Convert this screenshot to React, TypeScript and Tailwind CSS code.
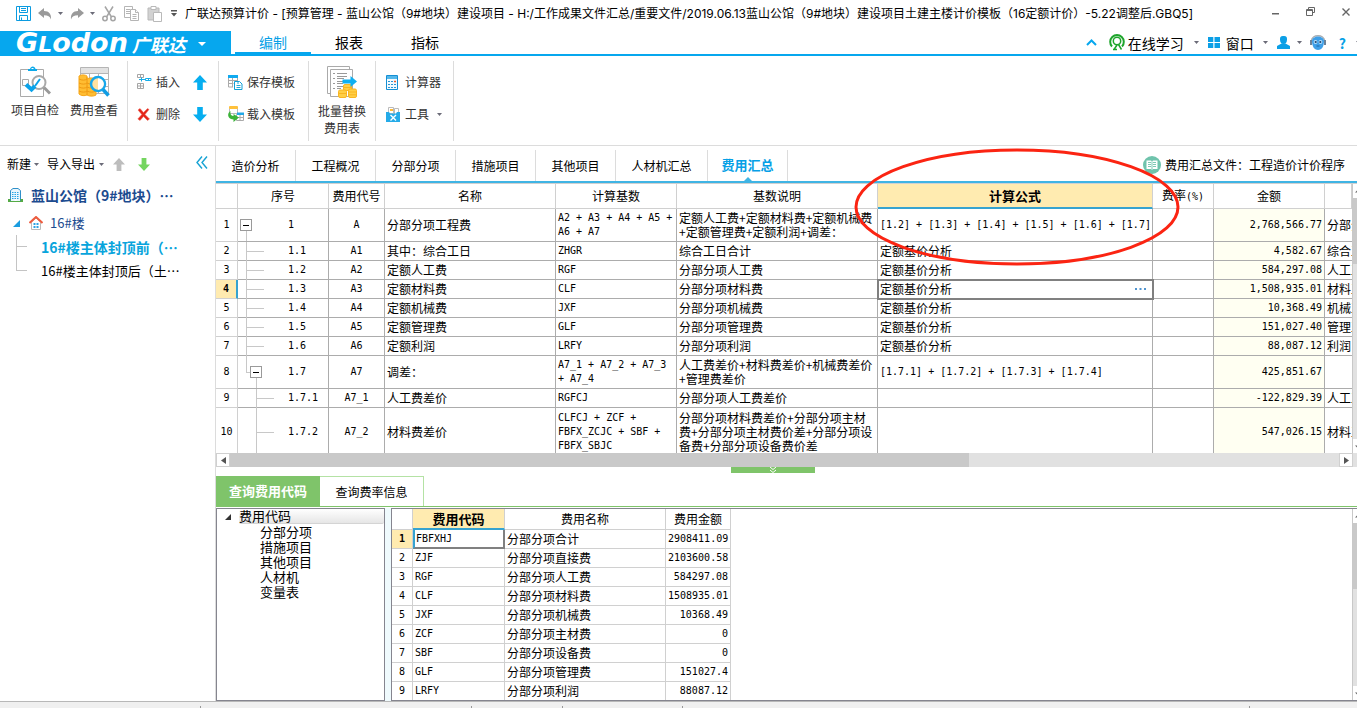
import React from "react";

type FeeRow = {
  no: string;
  level: number;
  serial: string;
  code: string;
  name: string;
  base: string;
  desc: string;
  formula: string;
  amount: string;
  note: string;
  height: string;
};

const SHORT = "h-[19px]";
const DOUBLE = "h-[33px]";

const feeRows: FeeRow[] = [
  { no: "1", level: 0, serial: "1", code: "A", name: "分部分项工程费", base: "A2 + A3 + A4 + A5 +\nA6 + A7", desc: "定额人工费+定额材料费+定额机械费\n+定额管理费+定额利润+调差：", formula: "[1.2] + [1.3] + [1.4] + [1.5] + [1.6] + [1.7]", amount: "2,768,566.77", note: "分部分项", height: DOUBLE },
  { no: "2", level: 1, serial: "1.1", code: "A1", name: "其中：综合工日", base: "ZHGR", desc: "综合工日合计", formula: "定额基价分析", amount: "4,582.67", note: "综合工日", height: SHORT },
  { no: "3", level: 1, serial: "1.2", code: "A2", name: "定额人工费", base: "RGF", desc: "分部分项人工费", formula: "定额基价分析", amount: "584,297.08", note: "人工工资", height: SHORT },
  { no: "4", level: 1, serial: "1.3", code: "A3", name: "定额材料费", base: "CLF", desc: "分部分项材料费", formula: "定额基价分析", amount: "1,508,935.01", note: "材料工费", height: SHORT },
  { no: "5", level: 1, serial: "1.4", code: "A4", name: "定额机械费", base: "JXF", desc: "分部分项机械费", formula: "定额基价分析", amount: "10,368.49", note: "机械工费", height: SHORT },
  { no: "6", level: 1, serial: "1.5", code: "A5", name: "定额管理费", base: "GLF", desc: "分部分项管理费", formula: "定额基价分析", amount: "151,027.40", note: "管理工费", height: SHORT },
  { no: "7", level: 1, serial: "1.6", code: "A6", name: "定额利润", base: "LRFY", desc: "分部分项利润", formula: "定额基价分析", amount: "88,087.12", note: "利润", height: SHORT },
  { no: "8", level: 1, serial: "1.7", code: "A7", name: "调差：", base: "A7_1 + A7_2 + A7_3\n+ A7_4", desc: "人工费差价+材料费差价+机械费差价\n+管理费差价", formula: "[1.7.1] + [1.7.2] + [1.7.3] + [1.7.4]", amount: "425,851.67", note: "", height: DOUBLE },
  { no: "9", level: 2, serial: "1.7.1", code: "A7_1", name: "人工费差价", base: "RGFCJ", desc: "分部分项人工费差价", formula: "", amount: "-122,829.39", note: "人工工资", height: SHORT },
  { no: "10", level: 2, serial: "1.7.2", code: "A7_2", name: "材料费差价", base: "CLFCJ + ZCF +\nFBFX_ZCJC + SBF +\nFBFX_SBJC", desc: "分部分项材料费差价+分部分项主材\n费+分部分项主材费价差+分部分项设\n备费+分部分项设备费价差", formula: "", amount: "547,026.15", note: "材料工费", height: "h-[49px]" },
];

const codeRows = [
  ["1", "FBFXHJ", "分部分项合计", "2908411.09"],
  ["2", "ZJF", "分部分项直接费", "2103600.58"],
  ["3", "RGF", "分部分项人工费", "584297.08"],
  ["4", "CLF", "分部分项材料费", "1508935.01"],
  ["5", "JXF", "分部分项机械费", "10368.49"],
  ["6", "ZCF", "分部分项主材费", "0"],
  ["7", "SBF", "分部分项设备费", "0"],
  ["8", "GLF", "分部分项管理费", "151027.4"],
  ["9", "LRFY", "分部分项利润", "88087.12"],
];

const MONO = "font-['DejaVu_Sans_Mono','Noto_Sans_CJK_SC',monospace] text-[10px]";

function Caret({ className = "text-[#6b6b78]" }: { className?: string }) {
  return (
    <svg className={`shrink-0 ${className}`} width="5" height="3" viewBox="0 0 5 3" fill="currentColor">
      <path d="M0 0h5L2.5 3z" />
    </svg>
  );
}

function SaveIcon() {
  return (
    <svg width="15" height="15" viewBox="0 0 15 15" fill="none" stroke="#0b9be0">
      <path d="M.5 .5h14v14H.5zM3.500 .5v6h8v-6M3.500 14.500v-5h8v5M5 2.500h5M5 4.500h5M5.500 11.500v3" />
    </svg>
  );
}

function UndoIcon({ flip = false }: { flip?: boolean }) {
  return (
    <svg className={flip ? "-scale-x-100" : ""} width="14" height="12" viewBox="0 0 14 12" fill="#9a9a9a">
      <path d="M0 5 6 0v3c5 0 7.500 3 7 8.500C12 8.500 10 7.200 6 7.200V10z" />
    </svg>
  );
}

function CutIcon() {
  return (
    <svg width="14" height="16" viewBox="0 0 14 16" fill="none" stroke="#a5a5a5" strokeWidth="1.500">
      <path d="M3 .5 9.500 11M11 .5 4.500 11" />
      <circle cx="3" cy="12.500" r="2.200" />
      <circle cx="11" cy="12.500" r="2.200" />
    </svg>
  );
}

function CopyIcon() {
  return (
    <svg width="16" height="15" viewBox="0 0 16 15" fill="#fff" stroke="#b5b5b5">
      <path d="M.5.5h8v11h-8zM2 3.500h4M2 5.500h4M2 7.500h4" />
      <path d="M6.500 3.500h5l3 3v8h-8z" />
      <path d="M11.500 3.500v3h3M8.500 8.500h4M8.500 10.500h4M8.500 12.500h4" />
    </svg>
  );
}

function PasteIcon() {
  return (
    <svg width="16" height="16" viewBox="0 0 16 16" fill="#fff" stroke="#b9b9b9">
      <path d="M1 2h11v12H1z" fill="#d2d2d2" />
      <path d="M4 .5h5v3H4z" />
      <path d="M6.500 6.500h8v9h-8z" />
    </svg>
  );
}

function CheckProjectIcon() {
  return (
    <svg width="32" height="32" viewBox="0 0 32 32" fill="none">
      <path d="M1.500 3.500h23v27h-23z" stroke="#aaa" fill="#fff" />
      <path d="M9 5V3h2c.5-3.500 5-3.500 5.500 0H18v2z" fill="#0ba9ea" />
      <path d="M12.500 2.500h2" stroke="#fff" />
      <path d="M3.500 13.500h6v6h-6z" stroke="#aaa" />
      <circle cx="20" cy="16.500" r="6.500" stroke="#a9a9a9" strokeWidth="2" fill="#fff" />
      <path d="m25 21.500 6 6" stroke="#999" strokeWidth="3" />
      <path d="m7 18.500 5.500 5 3.500-3.500" stroke="#0ba3ea" strokeWidth="4" />
      <path d="m16 20 5-7" stroke="#0ba3ea" strokeWidth="2" />
    </svg>
  );
}

function FeeViewIcon() {
  return (
    <svg width="32" height="32" viewBox="0 0 32 32" fill="none">
      <path d="M2.500 1.500h28v26h-28z" fill="#fff" stroke="#b5b5b5" />
      <path d="M3 2h27v5H3z" fill="#e2e2e2" />
      <path d="M2 7.500h28M2 13.500h28M2 20.500h28M11.500 7v20M20.500 7v20" stroke="#b5b5b5" />
      <path d="M1 10c2-1.500 6-1.500 8 0v3c2-1.500 7-1.500 9 0v16c-2 1.500-7 1.500-9 0-2 1-6 1-8-1z" fill="#ffbd32" stroke="#f7a719" />
      <path d="M1 13c3 1.500 6 1.500 8 0M1 17c3 1.500 6 1.500 8 0M1 21c3 1.500 6 1.500 8 0M1 25c3 1.500 6 1.500 8 0M9 17c3 1.500 6 1.500 9 0M9 21c3 1.500 6 1.500 9 0M9 25c3 1.500 6 1.500 9 0M9 11v18" stroke="#f09a12" />
      <circle cx="20" cy="18" r="7" fill="#ffe1a0" stroke="#17a7ec" strokeWidth="2.500" />
      <path d="M20 12.200a5.800 5.800 0 0 1 0 11.600z" fill="#fff" />
      <path d="m25 23.500 5.500 6" stroke="#109de4" strokeWidth="3.500" />
    </svg>
  );
}

function InsertIcon() {
  return (
    <svg width="15" height="16" viewBox="0 0 15 16" fill="none" stroke="#a5a5a5">
      <path d="M.5 .5h6v3h-6zM3.500 .5v3M.5 9.500h6v5h-6zM3.500 9.500v5M.5 12h6" />
      <path d="M8.500 4.500H14v2H8.500zM11.500 4.500v2" stroke="#17aeea" />
      <path d="M2 5.500h6M4.500 3.500v4" stroke="#17aeea" />
    </svg>
  );
}

function DeleteIcon() {
  return (
    <svg width="13" height="13" viewBox="0 0 13 13">
      <path d="M1 2 3 .5l3.500 4L10.500.5 12 1.500 8 6.500l4.500 4.500-2 1.500-4-4-3.500 4L.8 11 4.800 6.500z" fill="#e42418" stroke="#ec6557" strokeWidth=".5" />
    </svg>
  );
}

function ArrowIcon({ down = false, className, thin = false }: { down?: boolean; className: string; thin?: boolean }) {
  return (
    <svg className={`shrink-0 ${className} ${down ? "rotate-180" : ""}`} width={thin ? 12 : 14} height={thin ? 13 : 15} viewBox="0 0 14 15" fill="currentColor">
      <path d="m7 0 7 7.500H9.800V15H4.200V7.500H0z" />
    </svg>
  );
}

function SaveTemplateIcon() {
  return (
    <svg width="15" height="15" viewBox="0 0 15 15" fill="none">
      <path d="M.5 1v11H5M4.500 2v10M.5 5.500h9M.5 8.500h5M9.500 3v3" stroke="#aaa" />
      <path d="M0 0h10v3H0z" fill="#10aaf0" />
      <path d="M6.500 6.500h5l2.500 2.500v5.500H6.500z" fill="#fff" stroke="#10a0d8" />
      <path d="M8.500 10.500h4M8.500 12.500h4M9 8h2" stroke="#22a8d8" />
    </svg>
  );
}

function LoadTemplateIcon() {
  return (
    <svg width="16" height="16" viewBox="0 0 16 16" fill="none">
      <path d="M1.500 2.500h8v5h-8z" fill="#fff" stroke="#bbb" />
      <rect x="1" y="0" width="9" height="3" rx="1" fill="#ffc13b" />
      <path d="M8.500 8.500h7v6h-7zM12 8.500v6M8.500 11.500h7" stroke="#aaa" fill="#fff" />
      <path d="M9 6.500h7v2.500H9z" fill="#20a8e8" />
      <path d="M2.500 5C-1 7-1 13 5.500 13.500V16l5.500-4.500L5.500 8v2C3 10 2 8 2.500 5z" fill="#3bb338" />
    </svg>
  );
}

function BatchReplaceIcon() {
  return (
    <svg width="32" height="32" viewBox="0 0 32 32" fill="none">
      <path d="M1.500.5h22v27h-22z" fill="#fff" stroke="#aaa" />
      <path d="M4.500 3.500h22v27h-22z" fill="#fff" stroke="#aaa" />
      <path d="M7 7.500h2M7 12.500h2M7 17.500h2M7 22.500h2M11 7.500h10M11 10.500h10M11 12.500h7M11 15.500h6M11 17.500h6M11 20.500h7M11 22.500h4" stroke="#999" />
      <g fill="#ffcf45" stroke="#f9b522">
        <rect x="17.500" y="18.500" width="8" height="6" rx="1.500" />
        <rect x="12.500" y="24" width="8" height="7.500" rx="1.500" />
        <rect x="22.500" y="23" width="8" height="8.500" rx="1.500" />
        <path d="M18 21.500h7M13 27.500h7M23 26h7M23 28.800h7" />
      </g>
      <path d="M16.500 13.500h8V10l6.500 5.500-6.500 5.500v-3.500h-8z" fill="#0fb0f2" />
    </svg>
  );
}

function CalculatorIcon() {
  return (
    <svg width="12" height="15" viewBox="0 0 12 15">
      <path d="M.5.5h11v14H.5z" fill="#f4fbff" stroke="#158fd4" />
      <path d="M1 1h10v3H1z" fill="#54b8ea" />
      <path d="M2 6.500h2M5 6.500h2M2 9.500h2M5 9.500h2M2 12.500h2M5 12.500h2M8 12.500h2M8 9.500h2" stroke="#2c94d4" strokeWidth="1.200" />
      <path d="M8 6.500h2" stroke="#e85b30" strokeWidth="1.500" />
    </svg>
  );
}

function ToolsIcon() {
  return (
    <svg width="14" height="15" viewBox="0 0 14 15" fill="none">
      <path d="M2.500.5h5v6h-5z" fill="#fff" stroke="#bbb" />
      <path d="M8.500 1.500h4v6h-4z" fill="#fff" stroke="#bbb" />
      <path d="M4 2h3v2H4z" fill="#ffbb35" />
      <path d="M0 5h3l1 1.500h6L11 5h3v10H0z" fill="#25abe8" />
      <path d="m4.500 8 5.500 5.500M10 8l-5.500 5.500" stroke="#fff" strokeWidth="1.400" />
    </svg>
  );
}

function StudyIcon() {
  return (
    <svg width="16" height="17" viewBox="0 0 16 17" fill="none" stroke="#1ea52c">
      <path d="M3 12.500A6.800 6.800 0 1 1 13 12.500" strokeWidth="2" />
      <circle cx="8" cy="7" r="3.700" strokeWidth="1.500" />
      <path d="m8 11-3 4.500M9.500 10.500l3 5M4 15.500h4" strokeWidth="1.500" />
    </svg>
  );
}

function RobotIcon() {
  return (
    <svg width="16" height="17" viewBox="0 0 16 17">
      <path d="M1.500 7c0-7 13-7 13 0" fill="none" stroke="#a8adb2" strokeWidth="1.500" />
      <path d="M2 7c0-6 12-6 12 0 0 5-2 9-6 9S2 12 2 7z" fill="#3e9fe8" />
      <path d="M0 6h2v5H0zM14 6h2v5h-2z" fill="#6c8298" />
      <circle cx="5.500" cy="8" r="1.900" fill="#b9e0fb" />
      <circle cx="10.500" cy="8" r="1.900" fill="#b9e0fb" />
      <circle cx="5.700" cy="8" r="1.100" fill="#184574" />
      <circle cx="10.300" cy="8" r="1.100" fill="#184574" />
      <path d="M6.500 12h3" stroke="#1c65a3" />
    </svg>
  );
}

function TitleBar() {
  return (
    <header className="flex h-[31px] shrink-0 items-center pt-1 pb-2 pl-4 pr-[7px]">
      <div className="flex items-center">
        <button aria-label="保存"><SaveIcon /></button>
        <button aria-label="撤销" className="ml-[7px]"><UndoIcon /></button>
        <Caret className="ml-1.5 text-[#6b6b78]" />
        <button aria-label="恢复" className="ml-[7px]"><UndoIcon flip /></button>
        <Caret className="ml-1.5 text-[#6b6b78]" />
        <button aria-label="剪切" className="ml-[7px]"><CutIcon /></button>
        <button aria-label="复制" className="ml-2"><CopyIcon /></button>
        <button aria-label="粘贴" className="ml-[7px]"><PasteIcon /></button>
        <button aria-label="更多" className="ml-2">
          <svg width="6" height="7" viewBox="0 0 6 7" fill="#555"><path d="M0 0h6v1.500H0zM0 3h6L3 6.500z" /></svg>
        </button>
      </div>
      <h1 className="ml-2 whitespace-nowrap font-['Inter','Noto_Sans_CJK_SC',sans-serif] text-xs text-black">
        广联达预算计价 - [预算管理 - 蓝山公馆（9#地块）建设项目 - H:/工作成果文件汇总/重要文件/2019.06.13蓝山公馆（9#地块）建设项目土建主楼计价模板（16定额计价）-5.22调整后.GBQ5]
      </h1>
      <div className="ml-auto flex items-center gap-[27px] pb-1">
        <button aria-label="最小化"><svg width="7" height="9" viewBox="0 0 7 9"><path d="M0 6h7v1.500H0z" fill="#666" /></svg></button>
        <button aria-label="还原"><svg width="9" height="9" viewBox="0 0 9 9" fill="none" stroke="#666"><path d="M2.500 2.500v-2h6v5h-2M.5 2.500h6v6h-6zM.5 3.500h6" /></svg></button>
        <button aria-label="关闭"><svg width="8" height="8" viewBox="0 0 8 8" stroke="#666" strokeWidth="1.400"><path d="m.5.5 7 7M7.500.5l-7 7" /></svg></button>
      </div>
    </header>
  );
}

function MenuBar() {
  return (
    <nav className="flex h-[25px] shrink-0 border-b-2 border-[#06a7ee] text-sm text-black">
      <button className="flex h-[25px] w-[231px] items-center bg-[#06a7ee] pl-4 text-white">
        <span className="font-['DejaVu_Sans',sans-serif] text-[27px] leading-6 font-bold italic">G<span className="text-[22px]">L</span>odon</span>
        <span className="ml-1 text-lg leading-6 font-bold italic">广联达</span>
        <svg className="ml-3" width="8" height="4" viewBox="0 0 8 4" fill="#fff"><path d="M0 0h8L4 4z" /></svg>
      </button>
      <a href="#edit" className="ml-1 flex w-[76px] items-center justify-center border-b-2 border-[#06a7ee] text-[#06a0e6]">编制</a>
      <a href="#report" className="flex w-[76px] items-center justify-center pb-0.5">报表</a>
      <a href="#index" className="flex w-[76px] items-center justify-center pb-0.5">指标</a>
      <div className="ml-auto flex items-center whitespace-nowrap">
        <button aria-label="收起">
          <svg width="11" height="7" viewBox="0 0 11 7" fill="none" stroke="#06a7ee" strokeWidth="2"><path d="m1 6 4.500-4.500L10 6" /></svg>
        </button>
        <button className="ml-3 flex items-center gap-[3px]"><StudyIcon />在线学习</button>
        <Caret className="ml-2.5 text-[#6b6b78]" />
        <button className="ml-[9px] flex items-center gap-1.5">
          <svg width="12" height="11" viewBox="0 0 12 11" fill="#0b9fe6"><path d="M0 0h5.300v5H0zM6.500 0H12v5H6.500zM0 6h5.300v5H0zM6.500 6H12v5H6.500z" /></svg>
          窗口
        </button>
        <Caret className="ml-[9px] text-[#6b6b78]" />
        <button aria-label="用户" className="ml-[9px]">
          <svg width="13" height="13" viewBox="0 0 13 13" fill="#0b9fe6"><path d="M3 3.500C3 .5 4 0 6.500 0S10 .5 10 3.500 8.500 8 6.500 8 3 6.500 3 3.500z" /><path d="M0 13V10l4.500-2.500h4L13 10v3z" /></svg>
        </button>
        <Caret className="ml-[7px] text-[#6b6b78]" />
        <button aria-label="助手" className="ml-2"><RobotIcon /></button>
        <button aria-label="帮助" className="ml-[13px] font-bold text-[#06a0e6]">?</button>
        <span className="ml-2.5 w-px overflow-hidden"><Caret /></span>
      </div>
    </nav>
  );
}

function ToolButton({ icon, label, children }: { icon: React.ReactNode; label: string; children?: React.ReactNode }) {
  return (
    <button className="flex h-8 items-center whitespace-nowrap">
      <span className="flex w-[19px] justify-start">{icon}</span>
      {label}
      {children}
    </button>
  );
}

function Ribbon() {
  return (
    <section className="flex h-[90px] shrink-0 border-b border-[#dcdcdc] pt-[5px] text-xs text-[#333]">
      <div className="flex h-20 w-[128px] items-start gap-[11px] border-r border-[#dcdcdc] pt-[5px] pl-[11px] whitespace-nowrap">
        <button className="flex flex-col items-center gap-1"><CheckProjectIcon />项目自检</button>
        <button className="flex flex-col items-center gap-1"><FeeViewIcon />费用查看</button>
      </div>
      <div className="flex h-20 w-[91px] justify-between border-r border-[#dcdcdc] pt-[5px] pr-[11px] pl-[9px]">
        <div>
          <ToolButton icon={<InsertIcon />} label="插入" />
          <ToolButton icon={<DeleteIcon />} label="删除" />
        </div>
        <div className="flex flex-col">
          <button aria-label="上移" className="flex h-8 items-center"><ArrowIcon className="text-[#06aef0]" /></button>
          <button aria-label="下移" className="flex h-8 items-center"><ArrowIcon down className="text-[#06aef0]" /></button>
        </div>
      </div>
      <div className="h-20 w-[90px] border-r border-[#dcdcdc] pt-[5px] pl-[9px]">
        <ToolButton icon={<SaveTemplateIcon />} label="保存模板" />
        <ToolButton icon={<LoadTemplateIcon />} label="载入模板" />
      </div>
      <div className="flex h-20 w-[67px] items-start justify-center border-r border-[#dcdcdc] pt-[5px]">
        <button className="flex flex-col items-center gap-1 leading-[17px]"><BatchReplaceIcon /><span>批量替换<br />费用表</span></button>
      </div>
      <div className="h-20 w-[78px] border-r border-[#dcdcdc] pt-[5px] pl-2.5">
        <ToolButton icon={<CalculatorIcon />} label="计算器" />
        <ToolButton icon={<ToolsIcon />} label="工具"><Caret className="ml-2 text-[#6b6b78]" /></ToolButton>
      </div>
    </section>
  );
}

function Sidebar() {
  return (
    <aside className="w-[216px] shrink-0 border-r border-[#dcdcdc] pt-1.5 text-[13px] text-black">
      <div className="flex h-6 items-center pl-[7px] text-xs whitespace-nowrap">
        <button className="flex items-center gap-[3px]">新建<Caret /></button>
        <button className="ml-2 flex items-center gap-1">导入导出<Caret /></button>
        <button aria-label="上移" className="ml-[9px]"><ArrowIcon thin className="text-[#bdbdbd]" /></button>
        <button aria-label="下移" className="ml-[13px]"><ArrowIcon thin down className="text-[#74d55f]" /></button>
        <button aria-label="收起侧栏" className="ml-auto pr-[7px] pb-1">
          <svg width="12" height="13" viewBox="0 0 12 13" fill="none" stroke="#17a3d4" strokeWidth="1.400"><path d="M6 .5 1 6.500l5 6M11 .5 6 6.500l5 6" /></svg>
        </button>
      </div>
      <div className="mt-[7px] flex h-6 items-center gap-2 pl-2 text-sm font-bold whitespace-nowrap text-[#1c4b8f]">
        <svg width="15" height="14" viewBox="0 0 15 14">
          <path d="M2.500 2.500 5 .5h5l2.500 2v11h-10z" fill="#eaf6fd" stroke="#2f8fc8" />
          <path d="M4 4.500h7M4 6.500h7M4 8.500h7M4 10.500h7" stroke="#27a5e6" strokeDasharray="1.500 1" />
          <path d="M6.500 11h2v2.500h-2z" fill="#fff" />
          <path d="M0 11h2.500v3H0zM12.500 11H15v3h-2.500zM2 13h11v1H2z" fill="#55aa45" />
        </svg>
        <a href="#project">蓝山公馆（9#地块）⋯</a>
      </div>
      <div className="mt-1 flex h-6 items-center pl-[13px] text-[#1c4b8f]">
        <svg width="7" height="7" viewBox="0 0 7 7" fill="#1b9de0"><path d="M7 0v7H0z" /></svg>
        <svg className="mr-[7px] ml-[9px]" width="14" height="14" viewBox="0 0 14 14" fill="none">
          <path d="M2.500 6v7.500h9V6L7 2z" fill="#fff" stroke="#bbb" />
          <path d="M.5 7 7 1l6.500 6" stroke="#ee5c3e" strokeWidth="2" />
          <path d="M4.500 7h2v2h-2zM7.500 7h2v2h-2zM4.500 10h2v2h-2zM7.500 10h2v2h-2z" fill="#2ea4e4" />
        </svg>
        <a href="#building">16#楼</a>
      </div>
      <div className="ml-4 flex">
        <div className="w-[11px]">
          <div className="h-3 border-b border-l border-[#c4c4c4]" />
          <div className="h-6 border-b border-l border-[#c4c4c4]" />
        </div>
        <div className="ml-3.5 flex flex-col whitespace-nowrap">
          <a href="#before" className="h-6 text-sm leading-6 font-bold text-[#08a4dc]">16#楼主体封顶前（⋯</a>
          <a href="#after" className="h-6 leading-6">16#楼主体封顶后（土⋯</a>
        </div>
      </div>
    </aside>
  );
}

function TreeGuides({ row }: { row: FeeRow }) {
  const line = "absolute bg-[#c8c8c8]";
  const box = "absolute flex size-3 items-center justify-center border border-[#9a9a9a] bg-white";
  const minus = <span className="h-px w-1.5 bg-black" />;
  if (row.level === 0) {
    return (
      <>
        <span className={`${line} top-1/2 bottom-0 left-2 w-px`} />
        <button aria-label="折叠" className={`${box} top-2.5 left-0.5`}>{minus}</button>
      </>
    );
  }
  if (row.no === "8") {
    return (
      <>
        <span className={`${line} top-0 left-2 h-1/2 w-px`} />
        <span className={`${line} top-1/2 left-2 h-px w-2`} />
        <span className={`${line} top-1/2 bottom-0 left-[18px] w-px`} />
        <button aria-label="折叠" className={`${box} top-2.5 left-3`}>{minus}</button>
      </>
    );
  }
  if (row.level === 1) {
    return (
      <>
        <span className={`${line} top-0 -bottom-px left-2 w-px`} />
        <span className={`${line} top-1/2 left-2 h-px w-[18px]`} />
      </>
    );
  }
  return (
    <>
      <span className={`${line} top-0 -bottom-px left-[18px] w-px`} />
      <span className={`${line} top-1/2 left-[18px] h-px w-[18px]`} />
    </>
  );
}

function VerticalScrollbar({ thumb }: { thumb: string }) {
  return (
    <div className="flex w-[5px] shrink-0 flex-col overflow-hidden border-l border-[#c8c8c8] bg-[#e1e1e1]">
      <button aria-label="向上滚动" className="flex h-3.5 shrink-0 items-center bg-white pl-0.5">
        <svg width="3" height="3" viewBox="0 0 3 3" fill="#666"><path d="M3 0v3H0z" /></svg>
      </button>
      <div className={`${thumb} shrink-0 bg-[#c9c9c9]`} />
      <button aria-label="向下滚动" className="mt-auto flex h-3.5 shrink-0 items-center bg-white pl-0.5">
        <svg width="3" height="3" viewBox="0 0 3 3" fill="#666"><path d="M0 0h3v3z" /></svg>
      </button>
    </div>
  );
}

function FeeTable() {
  const head = "h-[25px] border-r border-b border-[#d0d0d0] p-0 font-normal";
  const cell = "border-r border-b border-[#acacac] px-0.5 py-0 whitespace-pre";
  return (
    <div className="flex h-[270px] shrink-0 border-t border-[#d0d0d0]">
      <div className="min-w-0 flex-1 overflow-hidden">
        <table className="w-full table-fixed border-separate border-spacing-0 text-xs leading-[14px] text-black">
          <colgroup>
            <col className="w-[22px]" /><col className="w-[91px]" /><col className="w-14" /><col className="w-[171px]" />
            <col className="w-[121px]" /><col className="w-[201px]" /><col className="w-[275px]" /><col className="w-[61px]" />
            <col className="w-[111px]" /><col />
          </colgroup>
          <thead>
            <tr>
              <th className={head} />
              <th className={head}>序号</th>
              <th className={head}>费用代号</th>
              <th className={head}>名称</th>
              <th className={head}>计算基数</th>
              <th className={head}>基数说明</th>
              <th className="h-[25px] border-r border-b-2 border-r-[#d0d0d0] border-b-[#36a3d0] bg-[#ffebb0] p-0 text-[13px] font-bold">计算公式</th>
              <th className={head}>费率<span className={MONO}>(%)</span></th>
              <th className={head}>金额</th>
              <th className={head} />
            </tr>
          </thead>
          <tbody>
            {feeRows.map((r) => {
              const active = r.no === "4";
              const latin = !r.formula.startsWith("定");
              return (
                <tr key={r.no} className={r.height}>
                  <td className={`border-b p-0 text-center ${MONO} ${active ? "border-r-2 border-r-[#36a3d0] border-b-[#d0d0d0] bg-[#ffebb0] font-bold" : "border-r border-[#d0d0d0]"}`}>{r.no}</td>
                  <td className={`relative border-r border-b border-[#acacac] p-0 pl-[50px] ${MONO}`}>
                    <TreeGuides row={r} />
                    {r.serial}
                  </td>
                  <td className={`${cell} text-center ${MONO}`}>{r.code}</td>
                  <td className={cell}>{r.name}</td>
                  <td className={`${cell} ${MONO}`}>{r.base}</td>
                  <td className={cell}>{r.desc}</td>
                  <td className={`${cell} ${latin ? MONO : ""} ${active ? "outline-2 -outline-offset-1 outline-[#808080]" : ""}`}>
                    {active ? (
                      <div className="flex justify-between pr-1">
                        {r.formula}
                        <button aria-label="编辑公式" className="flex items-center">
                          <svg width="11" height="2" viewBox="0 0 11 2" fill="#4f94d0"><path d="M0 0h2v2H0zM4.500 0h2v2h-2zM9 0h2v2H9z" /></svg>
                        </button>
                      </div>
                    ) : r.formula}
                  </td>
                  <td className={cell} />
                  <td className={`${cell} bg-[#fffff2] text-right ${MONO}`}>{r.amount}</td>
                  <td className="overflow-hidden border-b border-[#acacac] py-0 pl-0.5 whitespace-pre">{r.note}</td>
                </tr>
              );
            })}
          </tbody>
        </table>
      </div>
      <VerticalScrollbar thumb="h-[66px]" />
    </div>
  );
}

function HorizontalScrollbar() {
  return (
    <div className="flex h-3.5 shrink-0 bg-[#e1e1e1] pr-1">
      <button aria-label="向左滚动" className="flex w-3.5 items-center justify-center border border-[#d0d0d0] bg-white">
        <svg width="5" height="7" viewBox="0 0 5 7" fill="#555"><path d="M5 0v7L0 3.500z" /></svg>
      </button>
      <div className="w-[65%] bg-[#c9c9c9]" />
      <button aria-label="向右滚动" className="ml-auto flex w-3.5 items-center justify-center border border-[#d0d0d0] bg-white">
        <svg width="5" height="7" viewBox="0 0 5 7" fill="#555"><path d="M0 0v7l5-3.500z" /></svg>
      </button>
    </div>
  );
}

function SheetTabs() {
  const tab = "flex w-20 items-center justify-center border-r border-[#dcdcdc]";
  return (
    <div className="flex h-[37px] shrink-0 border-b-2 border-[#3fb4e4] pt-1 text-xs whitespace-nowrap text-black">
      <a href="#cost" className={tab}>造价分析</a>
      <a href="#overview" className={tab}>工程概况</a>
      <a href="#items" className={tab}>分部分项</a>
      <a href="#measures" className={tab}>措施项目</a>
      <a href="#other" className={tab}>其他项目</a>
      <a href="#labor" className="flex w-[92px] items-center justify-center border-r border-[#dcdcdc]">人材机汇总</a>
      <a href="#summary" className={`relative pb-0.5 text-[13px] font-bold text-[#06a0e6] ${tab}`}>
        费用汇总
        <svg className="absolute bottom-0 left-9" width="8" height="4" viewBox="0 0 8 4" fill="#3fb4e4"><path d="M0 4h8L4 0z" /></svg>
      </a>
      <div className="ml-auto flex items-center gap-1 pr-3 pb-0.5">
        <svg width="18" height="18" viewBox="0 0 18 18">
          <circle cx="9" cy="9" r="9" fill="#6fc3ac" />
          <path d="M3.500 4.500H8l1 1 1-1h4.500v8.500H10l-1 1-1-1H3.500z" fill="#fff" />
          <path d="M5 6.500h3M5 8.500h3M5 10.500h3M10 6.500h3M10 8.500h3M10 10.500h3M9 5.500v8" stroke="#6fc3ac" strokeWidth=".9" />
        </svg>
        费用汇总文件：工程造价计价程序
      </div>
    </div>
  );
}

function QueryPanel() {
  const head = "h-5 border-r border-b border-[#d0d0d0] p-0 font-normal";
  const cell = "h-[19px] border-r border-b border-[#d0d0d0] px-0.5 py-0";
  return (
    <section className="flex min-h-0 flex-1 flex-col">
      <div className="flex h-[31px] shrink-0 border-b border-[#7fc46a] text-xs text-black">
        <button className="w-[104px] bg-[#7fc46a] text-[13px] font-bold text-white">查询费用代码</button>
        <button className="w-[104px] border-t border-r border-[#b4e2a4]">查询费率信息</button>
      </div>
      <div className="mt-px flex min-h-0 flex-1">
        <div className="w-[169px] shrink-0 border border-[#85858f] text-[13px] leading-[15px] text-black">
          <div className="flex items-center pl-2">
            <svg width="6" height="6" viewBox="0 0 6 6" fill="#333"><path d="M6 0v6H0z" /></svg>
            <span className="ml-2 h-[15px] flex-1 rounded-xs border-b border-[#d4d4d4] bg-linear-to-b from-white to-[#e6e6e6] leading-[13px]">费用代码</span>
          </div>
          <ul className="pl-[43px]">
            <li>分部分项</li>
            <li>措施项目</li>
            <li>其他项目</li>
            <li>人材机</li>
            <li>变量表</li>
          </ul>
        </div>
        <div className="w-1.5 shrink-0 bg-[#effafd]" />
        <div className="flex min-w-0 flex-1 border border-r-0 border-[#85858f]">
          <div className="min-w-0 flex-1 overflow-hidden">
            <table className="w-[338px] table-fixed border-separate border-spacing-0 text-xs leading-[14px] text-black">
              <colgroup>
                <col className="w-[21px]" /><col className="w-[92px]" /><col className="w-[161px]" /><col className="w-[65px]" />
              </colgroup>
              <thead>
                <tr>
                  <th className={head} />
                  <th className="h-[21px] border-r border-b-2 border-r-[#d0d0d0] border-b-[#36a3d0] bg-[#ffebb0] p-0 text-[13px] font-bold">费用代码</th>
                  <th className={head}>费用名称</th>
                  <th className={head}>费用金额</th>
                </tr>
              </thead>
              <tbody>
                {codeRows.map(([no, code, name, amount], i) => (
                  <tr key={no}>
                    <td className={`${cell} text-center ${MONO} ${i === 0 ? "bg-[#ffebb0] font-bold" : ""}`}>{no}</td>
                    <td className={i === 0 ? `h-[19px] border-r-2 border-b-2 border-l-2 border-[#808080] border-l-[#36a3d0] py-0 pr-0.5 pl-px ${MONO}` : `${cell} ${MONO}`}>{code}</td>
                    <td className={cell}>{name}</td>
                    <td className={`${cell} text-right ${MONO}`}>{amount}</td>
                  </tr>
                ))}
              </tbody>
            </table>
          </div>
          <VerticalScrollbar thumb="h-[66px]" />
        </div>
      </div>
    </section>
  );
}

export default function App() {
  return (
    <div className="flex h-screen flex-col overflow-hidden bg-white font-['Noto_Sans_CJK_SC',sans-serif]">
      <TitleBar />
      <MenuBar />
      <Ribbon />
      <div className="flex min-h-0 flex-1">
        <Sidebar />
        <main className="relative flex min-w-0 flex-1 flex-col">
          <SheetTabs />
          <FeeTable />
          <HorizontalScrollbar />
          <div className="flex h-[9px] shrink-0 justify-center pr-[28px]">
            <button aria-label="收起面板" className="flex h-[6px] w-[84px] items-center justify-center bg-[#7fc46a]">
              <svg width="8" height="6" viewBox="0 0 8 6" fill="none" stroke="#fff"><path d="m1 0 3 2.500L7 0M1 3l3 2.500L7 3" /></svg>
            </button>
          </div>
          <QueryPanel />
          <svg className="pointer-events-none absolute top-0.5 left-[638px]" width="326" height="118" viewBox="0 0 326 118" fill="none">
            <ellipse cx="163" cy="59" rx="161" ry="57" stroke="#fb2412" strokeWidth="3" />
          </svg>
        </main>
      </div>
      <footer className="flex h-[7px] shrink-0 items-end border-t border-[#b8b8b8] bg-[#f0f0f0]">
        <span className="ml-[200px] h-0.5 w-px bg-[#999]" />
        <span className="ml-[270px] h-0.5 w-px bg-[#999]" />
        <span className="ml-[90px] h-0.5 w-px bg-[#999]" />
        <span className="ml-[119px] h-0.5 w-px bg-[#999]" />
        <span className="mr-[107px] ml-auto h-0.5 w-px bg-[#999]" />
      </footer>
    </div>
  );
}
